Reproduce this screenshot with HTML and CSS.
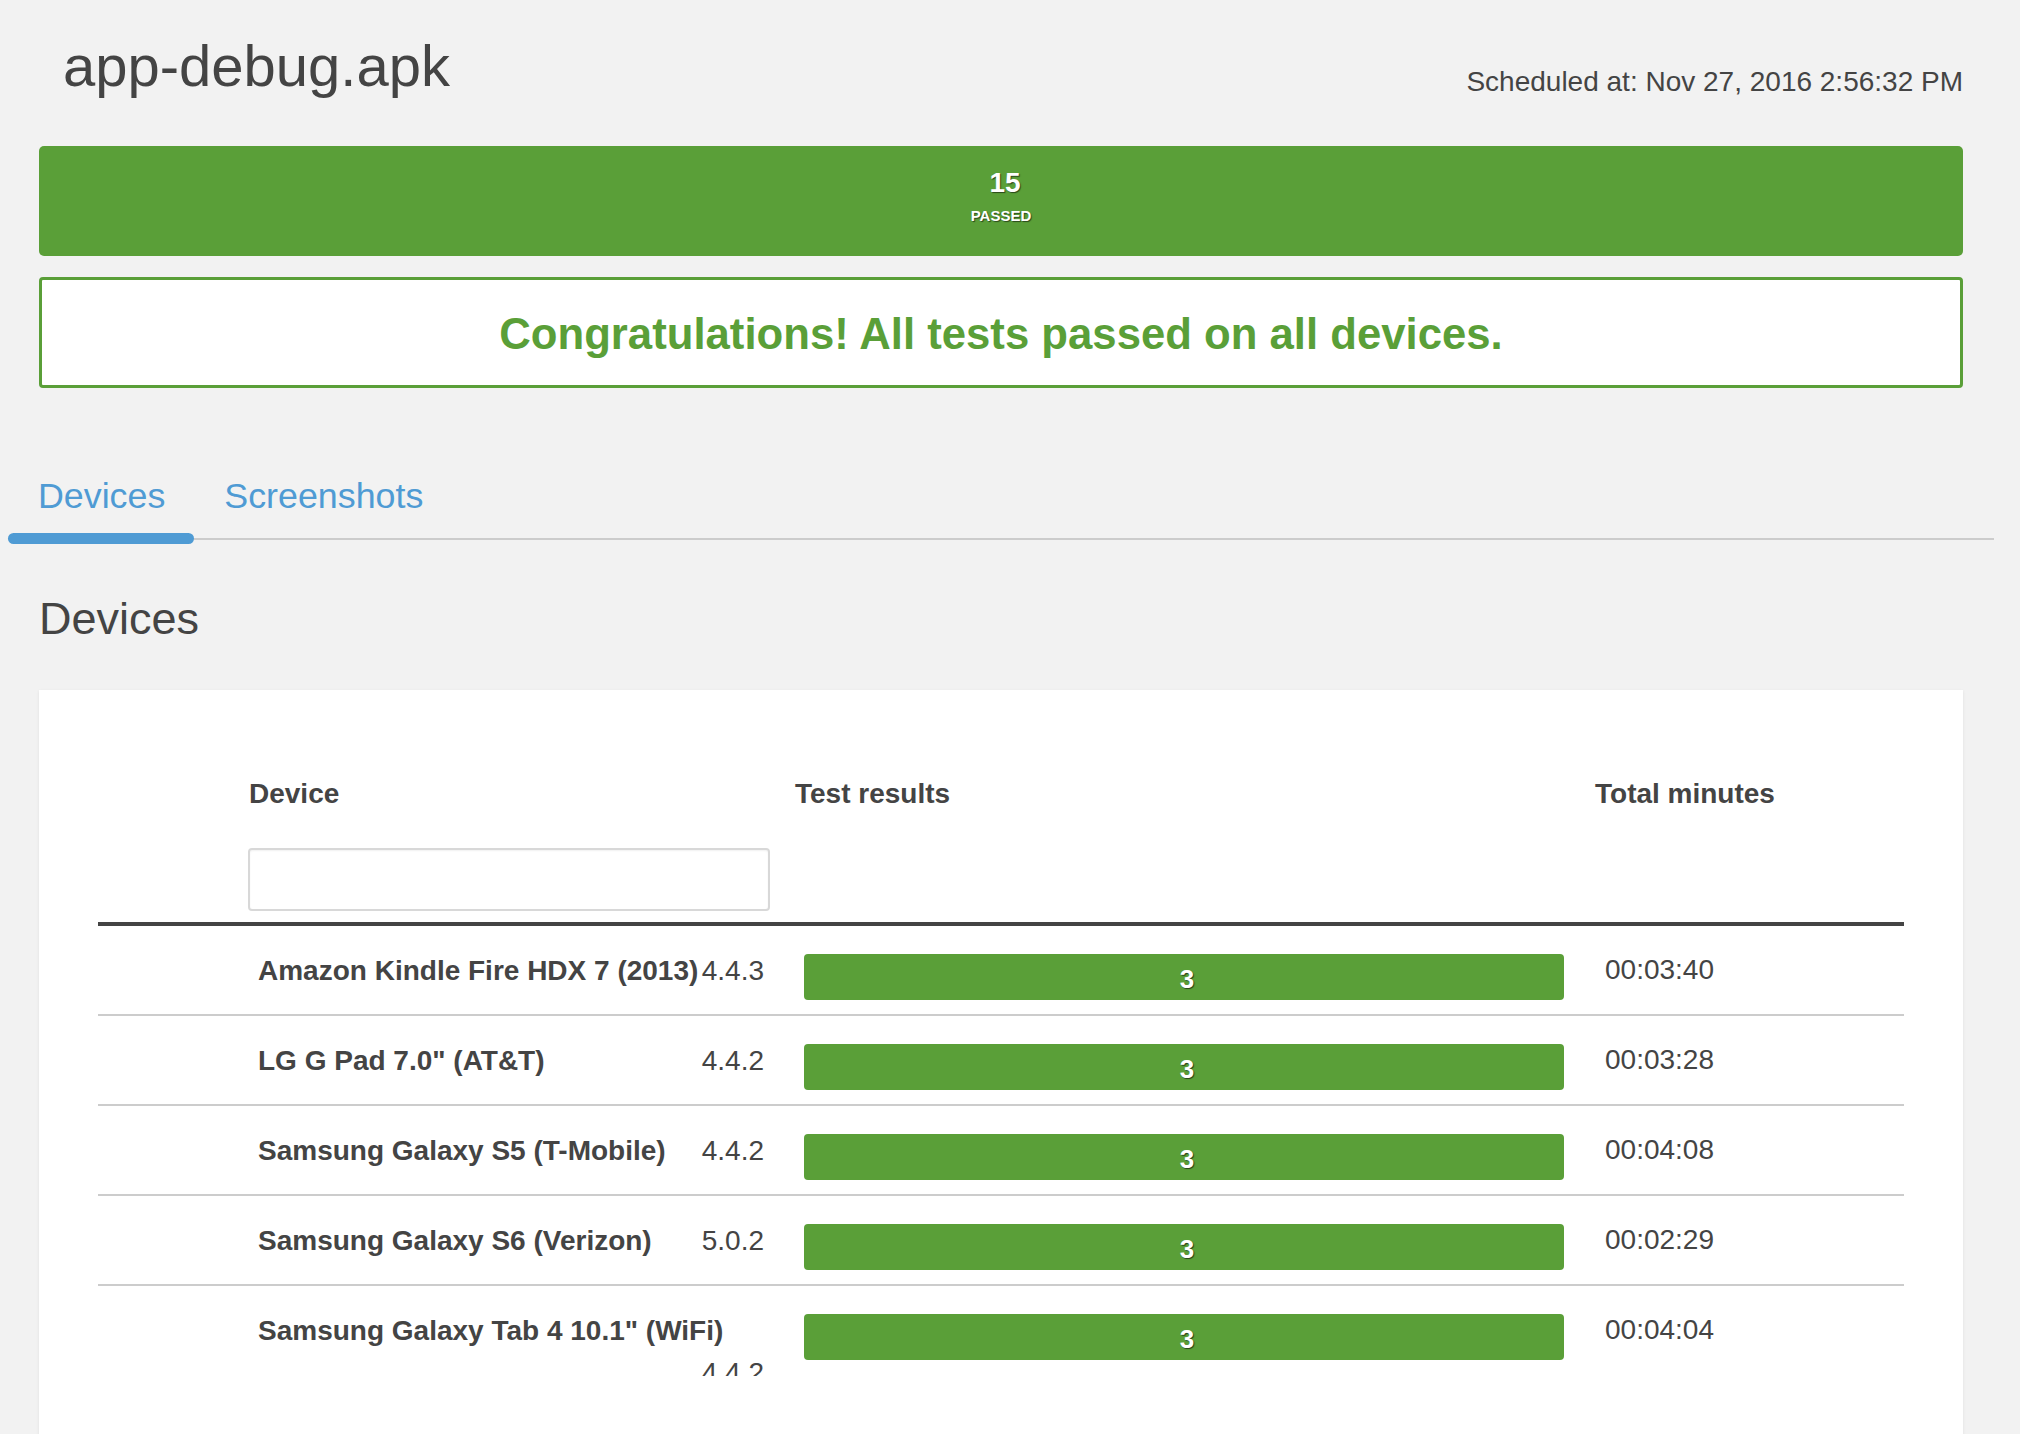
FILE: index.html
```html
<!DOCTYPE html>
<html lang="en">
<head>
<meta charset="utf-8">
<title>app-debug.apk</title>
<link rel="stylesheet" href="styles.css">
</head>
<body>
<div class="page">
  <header class="top">
    <h1 class="title">app-debug.apk</h1>
    <div class="scheduled">Scheduled at: Nov 27, 2016 2:56:32 PM</div>
  </header>

  <div class="summary">
    <div class="summary-count">15</div>
    <div class="summary-label">PASSED</div>
  </div>

  <div class="congrats">Congratulations! All tests passed on all devices.</div>

  <nav class="tabs">
    <a class="tab active">Devices</a>
    <a class="tab">Screenshots</a>
  </nav>

  <h2 class="section-title">Devices</h2>

  <section class="card">
    <div class="thead">
      <div class="th th-device">Device</div>
      <div class="th th-results">Test results</div>
      <div class="th th-minutes">Total minutes</div>
      <div class="filter-cell"><input class="filter" type="text"></div>
    </div>

    <div class="row">
      <div class="cell"></div>
      <div class="cell cell-name"><span class="name">Amazon Kindle Fire HDX 7 (2013)</span><span class="version">4.4.3</span></div>
      <div class="cell cell-bar"><div class="bar">3</div></div>
      <div class="cell cell-time">00:03:40</div>
    </div>
    <div class="row">
      <div class="cell"></div>
      <div class="cell cell-name"><span class="name">LG G Pad 7.0" (AT&amp;T)</span><span class="version">4.4.2</span></div>
      <div class="cell cell-bar"><div class="bar">3</div></div>
      <div class="cell cell-time">00:03:28</div>
    </div>
    <div class="row">
      <div class="cell"></div>
      <div class="cell cell-name"><span class="name">Samsung Galaxy S5 (T-Mobile)</span><span class="version">4.4.2</span></div>
      <div class="cell cell-bar"><div class="bar">3</div></div>
      <div class="cell cell-time">00:04:08</div>
    </div>
    <div class="row">
      <div class="cell"></div>
      <div class="cell cell-name"><span class="name">Samsung Galaxy S6 (Verizon)</span><span class="version">5.0.2</span></div>
      <div class="cell cell-bar"><div class="bar">3</div></div>
      <div class="cell cell-time">00:02:29</div>
    </div>
    <div class="row last">
      <div class="cell"></div>
      <div class="cell cell-name"><span class="name">Samsung Galaxy Tab 4 10.1" (WiFi)</span><span class="version">4.4.2</span></div>
      <div class="cell cell-bar"><div class="bar">3</div></div>
      <div class="cell cell-time">00:04:04</div>
    </div>
  </section>
</div>
</body>
</html>
```

FILE: styles.css
```css
* { box-sizing: border-box; }

html, body {
  margin: 0;
  padding: 0;
  background: #f2f2f2;
  font-family: "Liberation Sans", Arial, Helvetica, sans-serif;
  color: #444;
  overflow: hidden;
}

.page {
  width: 1924px;
  margin-left: 39px;
}

/* header */
.top {
  display: flex;
  justify-content: space-between;
  align-items: flex-start;
  height: 146px;
}
.title {
  margin: 0;
  padding: 37px 0 0 24px;
  font-size: 58px;
  line-height: 57px;
  font-weight: normal;
  color: #444;
}
.scheduled {
  padding: 68px 0 0 0;
  font-size: 28px;
  line-height: 28px;
  color: #444;
}

/* summary bar */
.summary {
  height: 110px;
  background: #5a9f38;
  border-radius: 5px;
  display: flex;
  flex-direction: column;
  align-items: center;
  padding-top: 23px;
  color: #fff;
  font-weight: bold;
  text-shadow: 1px 1px 1px rgba(0, 0, 0, 0.55);
}
.summary-count {
  font-size: 28px;
  line-height: 28px;
  padding-left: 8px;
}
.summary-label {
  font-size: 15px;
  line-height: 15px;
  margin-top: 11px;
}

/* congrats */
.congrats {
  margin-top: 21px;
  height: 111px;
  border: 3px solid #5a9f38;
  border-radius: 4px;
  background: #fff;
  display: flex;
  align-items: center;
  justify-content: center;
  color: #5a9f38;
  font-weight: bold;
  font-size: 43.7px;
  padding-top: 2px;
}

/* tabs */
.tabs {
  margin: 91px 0 0 -31px;
  width: 1986px;
  display: flex;
  border-bottom: 2px solid #cccccc;
}
.tab {
  position: relative;
  display: block;
  padding: 0 29px 24px 30px;
  font-size: 35.8px;
  line-height: 35px;
  color: #4f9bd4;
  text-decoration: none;
}
.tab.active::after {
  content: "";
  position: absolute;
  left: 0;
  right: 0;
  bottom: -6px;
  height: 11px;
  border-radius: 6px;
  background: #4f9bd4;
}

/* section title */
.section-title {
  margin: 57px 0 0 0;
  font-size: 45px;
  line-height: 44px;
  font-weight: normal;
  color: #444;
}

/* card */
.card {
  margin-top: 49px;
  background: #fff;
  padding: 83px 59px 200px 59px;
  box-shadow: 0 1px 3px rgba(0, 0, 0, 0.08);
}

.thead {
  display: grid;
  grid-template-columns: 151px 546px 800px 309px;
  border-bottom: 4px solid #444;
  padding-bottom: 11px;
}
.th {
  font-size: 28px;
  line-height: 42px;
  font-weight: bold;
  color: #444;
}
.th-device { grid-column: 2; }
.th-results { grid-column: 3; }
.th-minutes { grid-column: 4; }
.filter-cell {
  grid-column: 2;
  grid-row: 2;
  padding-top: 33px;
}
.filter {
  display: block;
  width: 522px;
  height: 63px;
  margin-left: -1px;
  border: 2px solid #d8d8d8;
  border-radius: 4px;
  background: #fff;
  box-shadow: inset 0 1px 2px rgba(0, 0, 0, 0.06);
  font-size: 28px;
  outline: none;
}

.row {
  display: grid;
  grid-template-columns: 151px 546px 800px 309px;
  height: 90px;
  border-bottom: 2px solid #cccccc;
  overflow: hidden;
  font-size: 28px;
  line-height: 42px;
  color: #444;
}
.row.last { border-bottom: none; }

.cell-name {
  display: flex;
  flex-wrap: wrap;
  align-content: flex-start;
  padding: 24px 31px 0 9px;
}
.name { font-weight: bold; }
.version { margin-left: auto; }

.cell-bar {
  padding: 28px 31px 0 9px;
}
.bar {
  height: 46px;
  background: #5a9f38;
  border-radius: 4px;
  display: flex;
  align-items: center;
  justify-content: center;
  padding: 4px 0 0 6px;
  color: #fff;
  font-weight: bold;
  font-size: 26px;
  line-height: 26px;
  text-shadow: 1px 1px 1px rgba(0, 0, 0, 0.6);
}
.cell-time {
  padding: 23px 0 0 10px;
}
```
